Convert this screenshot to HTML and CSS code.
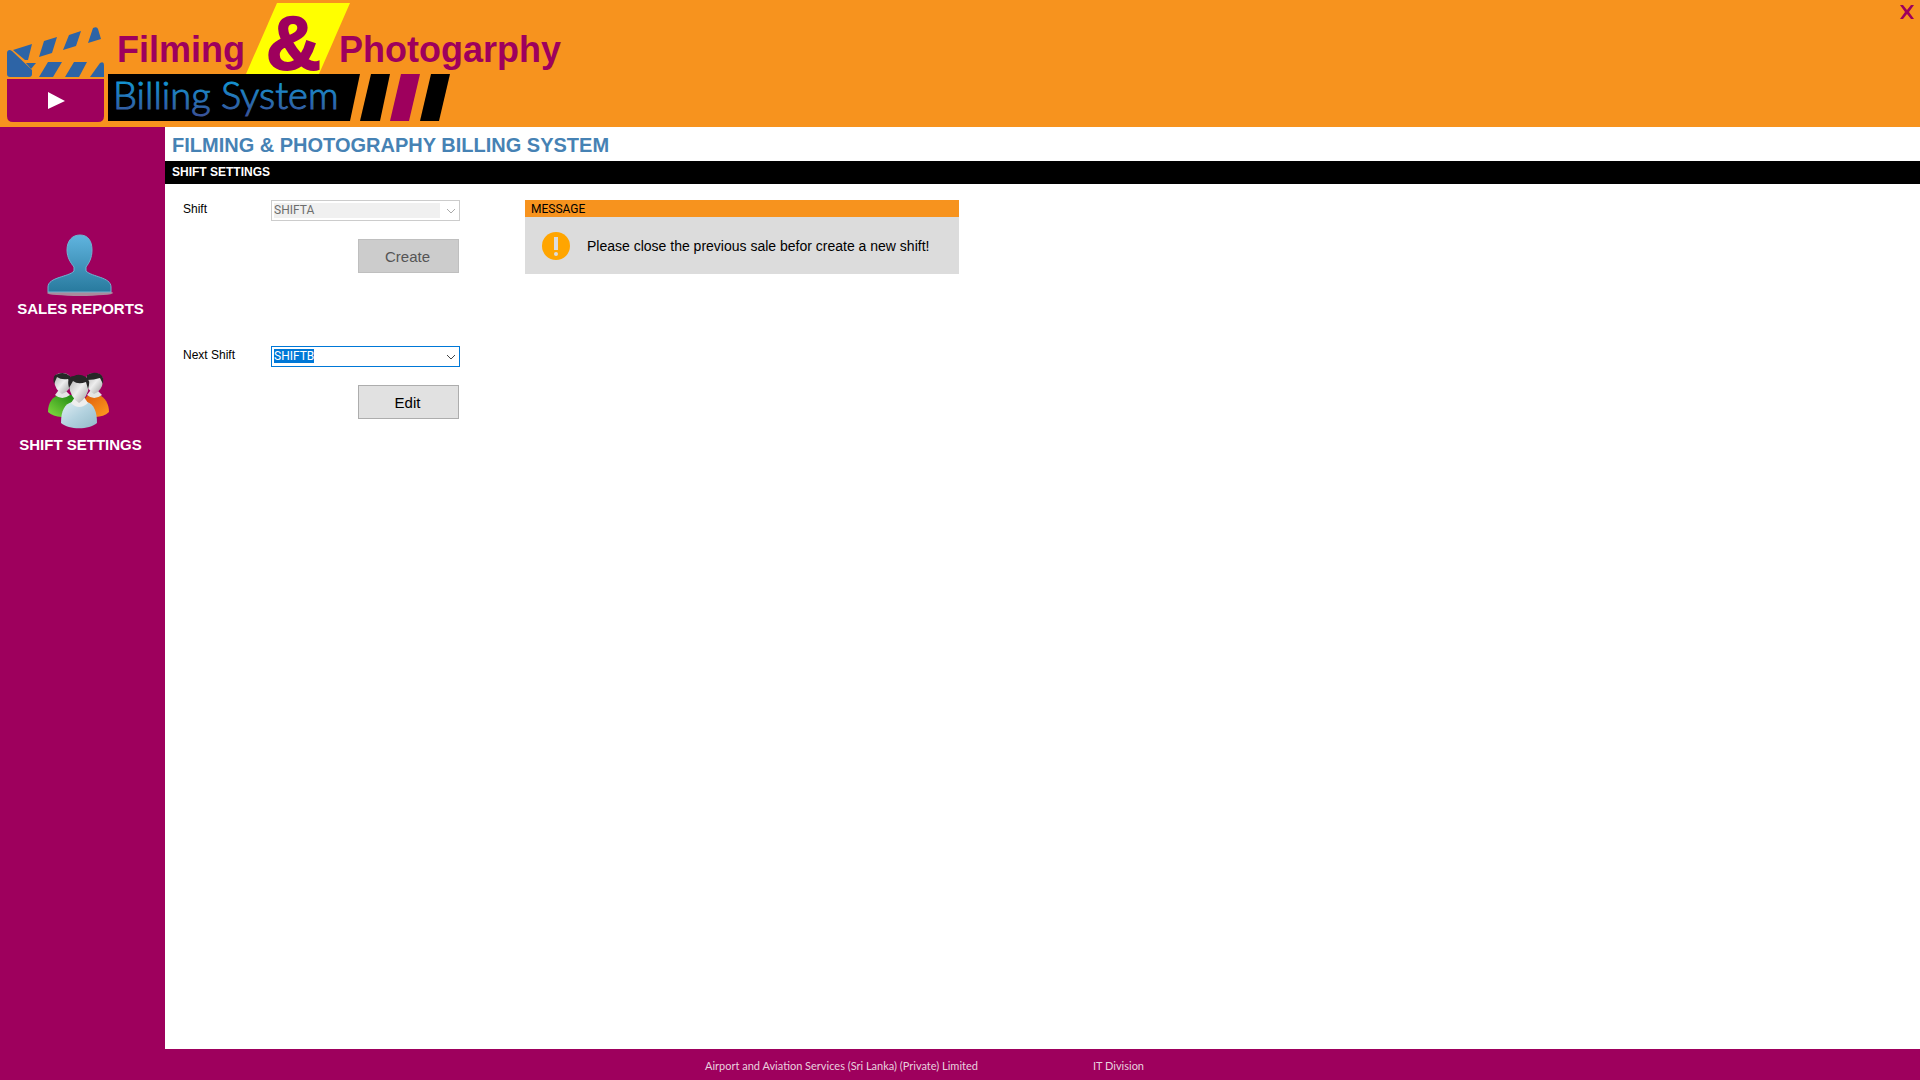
FILE: index.html
```html
<!DOCTYPE html>
<html lang="en">
<head>
<meta charset="utf-8">
<title>Filming &amp; Photography Billing System</title>
<link rel="stylesheet" href="styles.css">
</head>
<body>
<header class="banner">
  <svg class="logo" width="570" height="127" viewBox="0 0 570 127" role="img" aria-label="Filming and Photography Billing System">
    <defs>
      <linearGradient id="sky" gradientUnits="userSpaceOnUse" x1="0" y1="78" x2="0" y2="116">
        <stop offset="0" stop-color="#0f9bd8"/><stop offset="1" stop-color="#3a5299"/>
      </linearGradient>
    </defs>
    <g fill="#2d64a6">
      <path d="M7 53Q7 50 10 50L12 51L32 70V74Q32 77 29 77H10Q7 77 7 74Z"/>
      <path d="M13 50L32 44L28 60L25 60Z"/>
      <path d="M26 63H36L31 69Z"/>
      <path d="M44 41L57 37L52 53L39 57Z"/>
      <path d="M69 35L81 31L76 46L63 50Z"/>
      <path d="M93 28Q97 26 98 29L101 39L88 43Z"/>
      <path d="M48 62H62L53 77H39Z"/>
      <path d="M74 62H87L79 77H65Z"/>
      <path d="M100 63Q104 61 104 65V77H90Z"/>
    </g>
    <path fill="#9e005d" d="M7 79H104V116Q104 122 98 122H13Q7 122 7 116Z"/>
    <path fill="#fff" d="M48 92V109L65 101Z"/>
    <path fill="#ff0" d="M277 3H350L319 74H246Z"/>
    <path d="M108 74H360L350 121H108Z"/>
    <path d="M371 74H390L380 121H360Z"/>
    <path fill="#9e005d" d="M401 74H420L409 121H390Z"/>
    <path d="M431 74H450L439 121H420Z"/>
    <text class="logo-word" x="117" y="62">Filming</text>
    <text class="logo-amp" x="266" y="69">&amp;</text>
    <text class="logo-word" x="339" y="62">Photogarphy</text>
    <text class="logo-sub" x="113" y="109" fill="url(#sky)" stroke="url(#sky)">Billing System</text>
  </svg>
  <button class="close" type="button" aria-label="Close">
    <svg width="14" height="14" viewBox="0 0 14 14"><path d="M0 0H3L7 5L11 0H14L9 7L14 14H11L7 9L3 14H0L5 7Z" fill="#9e005d"/></svg>
  </button>
</header>
<div class="body">
  <nav class="sidebar">
    <a class="nav-item" href="#sales">
      <svg width="68" height="64" viewBox="0 0 68 64">
        <defs><linearGradient id="person" x1="0" y1="0" x2="0" y2="1"><stop offset="0" stop-color="#60b4df"/><stop offset="1" stop-color="#287a9e"/></linearGradient></defs>
        <ellipse cx="33" cy="61" rx="33" ry="3" fill="#a98a9d"/>
        <path d="M33 3C41 3 45 9 45 18C45 26 42 31 39 35V39C45 45 64 45 64 55V60H1V55C1 45 22 45 27 39V35C24 31 20 26 20 18C20 9 25 3 33 3Z" fill="url(#person)" stroke="#70b2d0"/>
      </svg>
      <span>SALES REPORTS</span>
    </a>
    <a class="nav-item" href="#shifts">
      <svg width="68" height="64" viewBox="2 0 68 64">
        <defs>
          <linearGradient id="green" x1="0" y1="1" x2="1" y2="0"><stop offset="0" stop-color="#85dd42"/><stop offset="1" stop-color="#18830f"/></linearGradient>
          <linearGradient id="orange" x1="0" y1="0" x2="1" y2="1"><stop offset="0" stop-color="#dd5a0b"/><stop offset="1" stop-color="#ff9e20"/></linearGradient>
          <linearGradient id="blue" x1="0" y1="0" x2="1" y2="1"><stop offset="0" stop-color="#e0edf3"/><stop offset=".5" stop-color="#b3d2df"/><stop offset="1" stop-color="#93bac8"/></linearGradient>
          <linearGradient id="face" x1="0" y1="0" x2="1" y2="1"><stop offset="0" stop-color="#aaa"/><stop offset=".5" stop-color="#eee"/><stop offset="1" stop-color="#999"/></linearGradient>
        </defs>
        <path d="M3 44C3 34 8 28 15 27H27C31 31 31 40 30 44C22 51 9 50 3 44Z" fill="url(#green)"/>
        <path d="M10 27Q17 33 25 27L21 23H13Z" fill="#e5e5e5"/>
        <path d="M9 12Q9 5 17 5Q26 5 26 13Q26 23 17 26Q10 22 9 12Z" fill="url(#face)"/>
        <path d="M9 16Q7 6 13 6Q19 3 25 8L26 15L23 11Q16 12 12 9Z" fill="#272727"/>
        <path d="M37 44C36 34 41 28 44 27H54C60 29 64 36 64 44C57 51 43 50 37 44Z" fill="url(#orange)"/>
        <path d="M42 27Q49 33 57 27L53 23H45Z" fill="#e5e5e5"/>
        <path d="M41 12Q41 5 49 5Q58 5 58 13Q57 23 49 26Q42 22 41 12Z" fill="url(#face)"/>
        <path d="M42 12V7Q49 3 55 6Q59 8 58 16L55 10Q49 12 42 12Z" fill="#272727"/>
        <path d="M16 55C16 42 20 36 27 34H42C49 36 52 44 52 55C44 62 24 62 16 55Z" fill="url(#blue)"/>
        <path d="M26 35Q34 43 43 35L39 29H30Z" fill="#eee"/>
        <path d="M24 17Q24 8 34 8Q44 8 44 18Q43 29 34 35Q25 29 24 17Z" fill="url(#face)"/>
        <path d="M24 20Q21 8 29 8Q34 5 41 9Q46 12 43 21L41 14Q33 17 28 13Z" fill="#272727"/>
      </svg>
      <span>SHIFT SETTINGS</span>
    </a>
  </nav>
  <main class="main">
    <h1 class="title">FILMING &amp; PHOTOGRAPHY BILLING SYSTEM</h1>
    <h2 class="subtitle">SHIFT SETTINGS</h2>
    <div class="content">
      <div class="forms">
        <form class="form">
          <label for="shift">Shift</label>
          <div class="combo combo-off">
            <select id="shift" disabled><option>SHIFTA</option></select>
            <svg class="arrow" width="9" height="6" viewBox="0 0 9 6"><path d="M1 1L5 5L9 1" /></svg>
          </div>
          <button class="btn" type="button" disabled>Create</button>
        </form>
        <form class="form">
          <label for="next">Next Shift</label>
          <div class="combo combo-active">
            <select id="next"><option>SHIFTB</option></select>
            <svg class="arrow" width="9" height="6" viewBox="0 0 9 6"><path d="M1 1L5 5L9 1" /></svg>
          </div>
          <button class="btn" type="button">Edit</button>
        </form>
      </div>
      <section class="message">
        <h3 class="message-head">MESSAGE</h3>
        <div class="message-body">
          <svg width="28" height="28" viewBox="0 0 28 28"><circle cx="14" cy="14" r="14" fill="#ffa500"/><path d="M12 5H16V18H12Z" fill="#dcdcdc"/><circle cx="14" cy="22" r="2" fill="#dcdcdc"/></svg>
          <p>Please close the previous sale befor create a new shift!</p>
        </div>
      </section>
    </div>
  </main>
</div>
<footer class="footer">
  <span>Airport and Aviation Services (Sri Lanka) (Private) Limited</span>
  <span>IT Division</span>
</footer>
</body>
</html>
```
FILE: styles.css
```css
* { box-sizing: border-box; }
body {
  margin: 0;
  min-height: 100vh;
  display: flex;
  flex-direction: column;
  background: #fff;
  color: #000;
  font: 12px/18px "Liberation Sans", Arial, sans-serif;
}
h1, h2, h3, p { margin: 0; }

.banner {
  display: flex;
  justify-content: space-between;
  align-items: flex-start;
  background: #f7931e;
}
.logo { display: block; }
.logo-word { font-size: 36px; font-weight: 700; fill: #9e005d; }
.logo-amp { font-size: 76px; font-weight: 700; fill: #9e005d; stroke: #9e005d; stroke-width: 2px; }
.logo-sub { font: 300 38px Lato, sans-serif; stroke-width: 1px; }
.close {
  display: flex;
  padding: 5px 6px;
  border: 0;
  background: none;
}

.body { flex: 1; display: flex; }
.sidebar {
  width: 165px;
  flex: none;
  display: flex;
  flex-direction: column;
  gap: 49px;
  padding-top: 105px;
  background: #9e005d;
}
.nav-item {
  display: flex;
  flex-direction: column;
  align-items: center;
  gap: 3px;
  padding-right: 4px;
  color: #fff;
  font-size: 15px;
  font-weight: 700;
  line-height: 20px;
  text-decoration: none;
}

.main { flex: 1; }
.title {
  padding: 2px 7px 0;
  color: #4682b4;
  font-size: 20px;
  line-height: 32px;
}
.subtitle {
  padding: 0 7px 1px;
  background: #000;
  color: #fff;
  font-size: 12px;
  line-height: 22px;
}
.content {
  display: flex;
  align-items: flex-start;
  gap: 65px;
  padding: 16px 18px;
}
.forms { display: flex; flex-direction: column; gap: 73px; }
.form {
  display: grid;
  grid-template-columns: 88px 189px;
  row-gap: 18px;
}
.combo { display: grid; align-items: center; height: 21px; border: 1px solid #ccc; }
.combo select {
  grid-area: 1 / 1;
  width: 100%;
  height: 15px;
  padding: 0 2px;
  border: 0;
  appearance: none;
  background: linear-gradient(#f0f0f0, #f0f0f0) 2px 0 / 166px 15px no-repeat;
  color: #6d6d6d;
  font: 12px/15px Roboto, Arial, sans-serif;
  opacity: 1;
}
.combo-active { border-color: #0078d7; }
.combo-active select {
  background: linear-gradient(#0078d7, #0078d7) 2px 0 / 40px 14px no-repeat;
  color: #fff;
}
.arrow {
  grid-area: 1 / 1;
  justify-self: end;
  margin-right: 4px;
  fill: none;
  stroke: #aaa;
  pointer-events: none;
}
.combo-active .arrow { stroke: #444; }
.btn {
  grid-column: 2;
  justify-self: end;
  width: 101px;
  height: 34px;
  margin-right: 1px;
  padding: 2px 2px 0 0;
  border: 1px solid #adadad;
  background: #e1e1e1;
  color: #000;
  font: 15px/18px "Liberation Sans", Arial, sans-serif;
}
.btn:disabled { border-color: #bfbfbf; background: #ccc; color: #555; }

.message { width: 434px; background: #dcdcdc; }
.message-head {
  padding: 1px 6px 0;
  background: #f7931e;
  font: 12px/16px Roboto, Arial, sans-serif;
}
.message-body {
  display: flex;
  align-items: center;
  gap: 17px;
  height: 57px;
  padding: 0 17px;
  font-size: 14px;
}

.footer {
  display: flex;
  justify-content: center;
  gap: 115px;
  padding: 2px 71px 0 0;
  background: #9e005d;
  color: #e8d0de;
  font: 11px/29px Lato, Arial, sans-serif;
}
```
